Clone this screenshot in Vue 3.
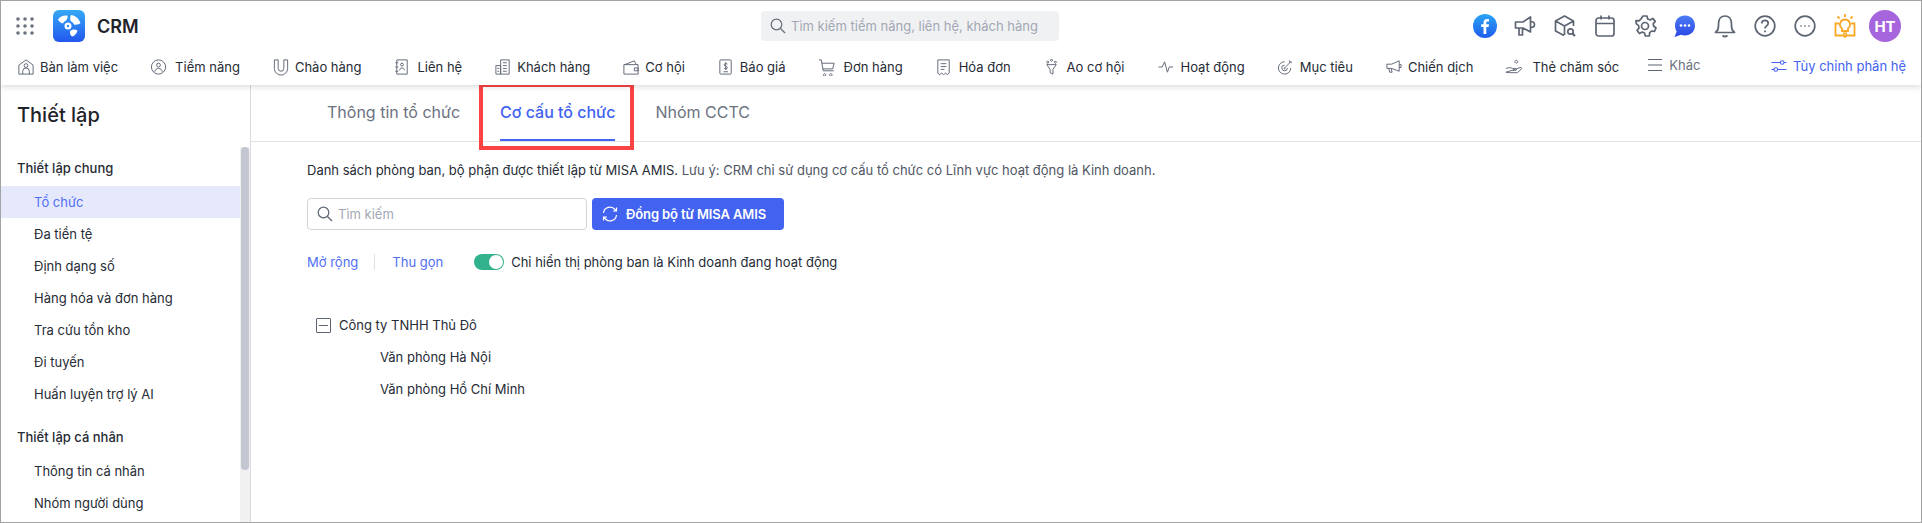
<script setup>
const navItems = [
  { label: 'Bàn làm việc', d: 'M2 17V7.500L9.500 2 17 7.500V17H2zM6 17v-3a3.500 3.500 0 0 1 7 0v3M9.500 6a2 2 0 1 1 0 4 2 2 0 0 1 0-4z' },
  { label: 'Tiềm năng', w: 20, d: 'M9 2a7.500 7.500 0 1 1 0 15 7.500 7.500 0 0 1 0-15zM9 5.500a2 2 0 1 1 0 4 2 2 0 0 1 0-4zM5 14.500c.6-2.500 2-3.500 4-3.500s3.400 1 4 3.500' },
  { label: 'Chào hàng', d: 'M2.500 2h4v9a3 3 0 0 0 6 0V2h4v9a7 7 0 0 1-14 0z' },
  { label: 'Liên hệ', w: 19, d: 'M4 2h11v15H4zM2.500 5h3M2.500 9.500h3M2.500 14h3M9.500 5.500a1.500 1.500 0 1 1 0 3 1.500 1.500 0 0 1 0-3zM7 13c.3-1.800 1.200-2.500 2.500-2.500s2.200.7 2.500 2.500' },
  { label: 'Khách hàng', d: 'M2 8h5v9H2zM7 17V2h9v15zM3.500 11h2M3.500 14h2M9.500 5h4M9.500 8h4M9.500 11h4M9.500 14h4' },
  { label: 'Cơ hội', d: 'M2 7h15v10H2zM3 7l10-4 2 4M13 10.500h4v3h-4z' },
  { label: 'Báo giá', d: 'M4 2h10a1 1 0 0 1 1 1v13a1 1 0 0 1-1 1H4a1 1 0 0 1-1-1V3a1 1 0 0 1 1-1zM11 6.500C10.500 5.500 7.500 5.500 7.500 7.200S11 8.500 11 10.200 8 12 7.500 10.800M9.200 4.500v8M7 14.500h4.500' },
  { label: 'Đơn hàng', w: 21, d: 'M1 2h2.500l2 11.500h11M4 5.500h13l-1.500 6H5M7 16.500a1.300 1.300 0 1 0 .01 0zM13.500 16.500a1.300 1.300 0 1 0 .01 0z' },
  { label: 'Hóa đơn', w: 19, d: 'M3 16V2h12v14l-2 1.500-2-1.500-2 1.500-2-1.500-2 1.500zM6 6h6M6 9h6M6 12h4' },
  { label: 'Ao cơ hội', w: 19, d: 'M4 7h10l-3.500 5v5l-3-1.500V12zM5 3.500a1 1 0 1 0 .01 0zM9 1.500a1 1 0 1 0 .01 0zM13 3.500a1 1 0 1 0 .01 0z' },
  { label: 'Hoạt động', w: 19, d: 'M1.500 9.500h4L8 4l3 11 2-5.500h4' },
  { label: 'Mục tiêu', d: 'M8 4a6.500 6.500 0 1 0 6.500 6.500M8 7.500a3 3 0 1 0 3 3M8 10.500a.5.5 0 1 0 .01 0M8 10.500l7-7M13 2.500l.5 2 2 .5' },
  { label: 'Chiến dịch', d: 'M2 6.500h5L15 3v11L7 11H2zM4 11l1 4h2.500l-1-4M15 7h2v3h-2' },
  { label: 'Thẻ chăm sóc', w: 22, d: 'M1 11c3-1 5-1 7 0h3c1.500 0 1.500 2 0 2H8M11 12l5-2c1.500-.5 2 1 1 2l-4 3.500H5L1 15zM12 2.500a1.500 1.500 0 1 0 .01 0zM13 7h.01' }
]
const settingsGeneral = ['Tổ chức', 'Đa tiền tệ', 'Định dạng số', 'Hàng hóa và đơn hàng', 'Tra cứu tồn kho', 'Đi tuyến', 'Huấn luyện trợ lý AI']
const settingsPersonal = ['Thông tin cá nhân', 'Nhóm người dùng']
</script>

<template>
  <div class="frame">
    <header class="header">
      <div class="top">
        <div class="brand">
          <svg class="grid" width="18" height="18" viewBox="0 0 18 18">
            <g fill="#6a7280">
              <circle cx="2" cy="2" r="1.800"/><circle cx="9" cy="2" r="1.800"/><circle cx="16" cy="2" r="1.800"/>
              <circle cx="2" cy="9" r="1.800"/><circle cx="9" cy="9" r="1.800"/><circle cx="16" cy="9" r="1.800"/>
              <circle cx="2" cy="16" r="1.800"/><circle cx="9" cy="16" r="1.800"/><circle cx="16" cy="16" r="1.800"/>
            </g>
          </svg>
          <svg class="logo" width="32" height="32" viewBox="0 0 32 32">
            <defs>
              <linearGradient id="lg" x1="0" y1="0" x2="0" y2="1">
                <stop offset="0" stop-color="#35a9f6"/><stop offset="1" stop-color="#2257ee"/>
              </linearGradient>
            </defs>
            <rect width="32" height="32" rx="6" fill="url(#lg)"/>
            <g fill="#fff">
              <path fill-rule="evenodd" d="M15 12.500a3.500 3.500 0 1 1 0 7 3.500 3.500 0 0 1 0-7zm0 2.300a1.200 1.200 0 1 0 0 2.400 1.200 1.200 0 0 0 0-2.400z"/>
              <path d="M5 9.500C7 6.500 10.500 5 14.500 5.500c.5 1.500-.3 3.800-1.500 5-1.300.8-2.300 1.500-3 3-1.800-.2-4-1.800-5-4z"/>
              <path d="M18 5c4 .3 8 3.500 9.500 8-1.500 1.500-4.500 2-6.500 1.500-.5-1.500-1.800-2.700-3.300-3.200C17 9.500 17 7 18 5z"/>
              <path d="M20 19.500c1.500 0 3.500.3 4.500 1-.3 2.500-2.500 5-5 6-1.500-.5-2.300-1.800-2.500-3.500-.1-1.200.2-2 .5-2.500 1-.2 1.700-.5 2.500-1z"/>
            </g>
          </svg>
          <span class="crm">CRM</span>
        </div>
        <div class="search-global">
          <svg width="16" height="16" viewBox="0 0 16 16" fill="none" stroke="#666d7a" stroke-width="1.200">
            <circle cx="6.500" cy="6.500" r="5.300"/><path d="M10.500 10.500l4.500 4.500"/>
          </svg>
          <span>Tìm kiếm tiềm năng, liên hệ, khách hàng</span>
        </div>
        <div class="tools">
          <svg class="tool" viewBox="0 0 24 24">
            <defs>
              <linearGradient id="fb" x1="0" y1="0" x2="0" y2="1">
                <stop offset="0" stop-color="#2aa4f4"/><stop offset="1" stop-color="#1f5cec"/>
              </linearGradient>
            </defs>
            <circle cx="12" cy="12" r="12" fill="url(#fb)"/>
            <path fill="#fff" d="M13.300 20v-7h2.300l.4-2.700h-2.700V8.700c0-.8.300-1.300 1.400-1.300H16V5.100c-.3 0-1.100-.1-2-.1-2.100 0-3.500 1.200-3.500 3.500v1.800H8.200V13h2.300v7z"/>
          </svg>
          <svg class="tool ln" viewBox="0 0 24 24">
            <path d="M2.500 8h7.500l7.500-5v15L10 14H2.500zM6 14l0 7h3.500v-7M17.500 7.500c2.500 0 4 1.300 4 3s-1.500 3-4 3"/>
          </svg>
          <svg class="tool ln" viewBox="0 0 24 24">
            <path d="M11 21.500L2.500 17V7L11.500 2l9 5v5M2.500 7l9 5v9M11.500 12l9-5"/>
            <circle cx="17.500" cy="17.500" r="2.700"/><path d="M19.500 19.500l2.500 2.500" stroke-width="2.200"/>
          </svg>
          <svg class="tool ln" viewBox="0 0 24 24">
            <rect x="3" y="4" width="18" height="18" rx="2.500"/><path d="M3 9.500h18M8 1.500v4M16 1.500v4"/>
          </svg>
          <svg class="tool ln" viewBox="0 0 24 24">
            <path d="M10 2h4l.7 3 2.400 1 2.700-1.600 2.400 3-2 2.400.4 2.200 2.400 2-1.500 3.400-3-.4-1.900 1.800-.2 3.200h-4l-.9-3-2.300-1-2.800 1.400-2.300-3 1.900-2.400-.4-2.400-2.400-2L3 6.600l3 .3 1.900-1.800z" stroke-linejoin="round"/>
            <circle cx="12" cy="12" r="3.500"/>
          </svg>
          <svg class="tool" viewBox="0 0 24 24">
            <defs>
              <linearGradient id="chat" x1="0" y1="0" x2="0" y2="1">
                <stop offset="0" stop-color="#4a7cf4"/><stop offset="1" stop-color="#2b46e4"/>
              </linearGradient>
            </defs>
            <path fill="url(#chat)" d="M12 1.500c5.800 0 10 4.300 10 10s-4.200 10-10 10c-1.400 0-2.800-.3-4-.8L1.500 23l2.200-5.500C2.600 16 2 13.800 2 11.500c0-5.700 4.200-10 10-10z"/>
            <g fill="#fff"><circle cx="8" cy="11.500" r="1.300"/><circle cx="12" cy="11.500" r="1.300"/><circle cx="16" cy="11.500" r="1.300"/></g>
          </svg>
          <svg class="tool ln" viewBox="0 0 24 24">
            <path d="M2.500 18.500c2-1.500 3-3 3-6.500V9.500C5.500 5 8 2 12 2s6.500 3 6.500 7.500V12c0 3.500 1 5 3 6.500zM9.500 21.500c1.500 1.200 3.500 1.200 5 0"/>
          </svg>
          <svg class="tool ln" viewBox="0 0 24 24">
            <circle cx="12" cy="12" r="9.800"/>
            <path d="M8.800 9.500c0-2 1.500-3.200 3.200-3.200s3.200 1.200 3.200 3c0 2.600-3.200 2.500-3.200 5.200M12 16.500v1.800"/>
          </svg>
          <svg class="tool ln" viewBox="0 0 24 24">
            <circle cx="12" cy="12" r="9.800"/>
            <path d="M7.500 12h1M11.500 12h1M15.500 12h1" stroke-width="1.800"/>
          </svg>
          <svg class="tool bulb" viewBox="0 0 24 24">
            <path d="M6 9.500H2.500v12h7.500c1 0 1.500.5 2 1.500.5-1 1-1.500 2-1.500h7.500v-12H18M12 5.500a5 5 0 0 1 3 9v2.500H9v-2.500a5 5 0 0 1 3-9zM10 19.500h4M12 0v3M4.500 2.500l2 2M19.500 2.500l-2 2"/>
          </svg>
          <div class="avatar">HT</div>
        </div>
      </div>
      <nav class="nav">
        <a v-for="item in navItems" :key="item.label" class="nav-item">
          <svg :width="item.w || 18" height="18" viewBox="0 0 19 19" preserveAspectRatio="xMinYMid meet" fill="none" stroke="#5d6573" stroke-width="1" stroke-linejoin="round">
            <path :d="item.d"/>
          </svg>
          <span>{{ item.label }}</span>
        </a>
        <a class="nav-item more">
          <svg width="18" height="18" viewBox="0 0 18 18" fill="none" stroke="#5d6573" stroke-width="1.100">
            <path d="M2 3.500h14M2 9h14M2 14.500h14"/>
          </svg>
          <span>Khác</span>
        </a>
        <a class="nav-item custom">
          <svg width="18" height="18" viewBox="0 0 18 18" fill="none" stroke="#4262f0" stroke-width="1.100">
            <path d="M1.500 5.500h9M14 5.500h2.500M1.500 12.500H4M7.500 12.500h9"/>
            <circle cx="12.200" cy="5.500" r="1.800"/><circle cx="5.800" cy="12.500" r="1.800"/>
          </svg>
          <span>Tùy chỉnh phân hệ</span>
        </a>
      </nav>
    </header>

    <div class="body">
      <aside class="sidebar">
        <h1 class="side-title">Thiết lập</h1>
        <div class="side-scroll">
          <div class="side-list">
            <div class="side-group">Thiết lập chung</div>
            <div
              v-for="(s, i) in settingsGeneral"
              :key="s"
              class="side-item"
              :class="{ active: i === 0 }"
            >{{ s }}</div>
            <div class="side-group second">Thiết lập cá nhân</div>
            <div v-for="s in settingsPersonal" :key="s" class="side-item">{{ s }}</div>
          </div>
          <div class="track"><div class="thumb"></div></div>
        </div>
      </aside>

      <main class="main">
        <div class="tabs">
          <div class="tab">Thông tin tổ chức</div>
          <div class="tab current">Cơ cấu tổ chức</div>
          <div class="tab">Nhóm CCTC</div>
          <div class="callout"></div>
        </div>
        <div class="content">
          <p class="note">Danh sách phòng ban, bộ phận được thiết lập từ MISA AMIS. <span>Lưu ý: CRM chỉ sử dụng cơ cấu tổ chức có Lĩnh vực hoạt động là Kinh doanh.</span></p>
          <div class="actions">
            <div class="search">
              <svg width="16" height="16" viewBox="0 0 16 16" fill="none" stroke="#5d6573" stroke-width="1.200">
                <circle cx="6.500" cy="6.500" r="5.300"/><path d="M10.500 10.500l4.500 4.500"/>
              </svg>
              <span>Tìm kiếm</span>
            </div>
            <button class="sync">
              <svg width="16" height="16" viewBox="0 0 16 16" fill="none" stroke="#fff" stroke-width="1.200">
                <path d="M1.500 7a6.500 6.500 0 0 1 11.500-3.500L14.500 5M14.500 1.500V5H11M14.500 9a6.500 6.500 0 0 1-11.500 3.500L1.500 11M1.500 14.500V11H5"/>
              </svg>
              <span>Đồng bộ từ MISA AMIS</span>
            </button>
          </div>
          <div class="filters">
            <a class="link">Mở rộng</a>
            <i class="sep"></i>
            <a class="link">Thu gọn</a>
            <span class="toggle"><span class="knob"></span></span>
            <span class="toggle-label">Chỉ hiển thị phòng ban là Kinh doanh đang hoạt động</span>
          </div>
          <div class="tree">
            <div class="tree-row">
              <span class="collapse"><i></i></span>
              <span>Công ty TNHH Thủ Đô</span>
            </div>
            <div class="tree-row child">Văn phòng Hà Nội</div>
            <div class="tree-row child">Văn phòng Hồ Chí Minh</div>
          </div>
        </div>
      </main>
    </div>
  </div>
</template>

<style>
html, body { margin: 0; background: #fff; overflow: hidden; }
</style>

<style scoped>
.frame {
  width: 1922px;
  height: 523px;
  box-sizing: border-box;
  border: 1px solid #a3a3a3;
  display: flex;
  flex-direction: column;
  overflow: hidden;
  font-family: Inter, "Noto Sans", sans-serif;
  font-size: 13px;
  color: #262b35;
  background: #fff;
}
.header {
  height: 84px;
  flex: none;
  box-shadow: 0 2px 6px rgba(0, 0, 0, .14);
  position: relative;
  z-index: 2;
  background: #fff;
}
.top {
  height: 50px;
  display: grid;
  grid-template-columns: 745px 298px 1fr;
  align-items: center;
  padding: 0 20px 0 15px;
  box-sizing: border-box;
}
.brand { display: flex; align-items: center; }
.grid { margin-right: 19px; }
.logo { margin-right: 12px; }
.crm { font-size: 18px; font-weight: 600; color: #1f2229; }
.search-global {
  height: 30px;
  background: #f0f1f3;
  border-radius: 4px;
  display: flex;
  align-items: center;
  gap: 5px;
  padding-left: 9px;
  color: #a2a7b3;
  font-size: 13px;
}
.tools {
  display: flex;
  justify-content: flex-end;
  align-items: center;
  gap: 16px;
}
.tool { width: 24px; height: 24px; flex: none; }
.ln { fill: none; stroke: #5d6573; stroke-width: 1.700; stroke-linejoin: round; }
.bulb { fill: none; stroke: #f9a825; stroke-width: 1.800; }
.avatar {
  width: 32px;
  height: 32px;
  margin-left: -4px;
  border-radius: 50%;
  background: #a765dd;
  color: #fff;
  font-weight: 700;
  font-size: 15px;
  display: flex;
  align-items: center;
  justify-content: center;
}
.nav {
  height: 32px;
  display: flex;
  align-items: center;
  gap: 32px;
  padding: 0 15px 0 16px;
}
.nav-item {
  display: flex;
  align-items: center;
  gap: 5px;
  white-space: nowrap;
  color: #262b35;
}
.more { color: #6b7280; margin-top: -4px; margin-left: -5px; }
.custom { color: #4262f0; margin-left: auto; margin-top: -2px; }
.body { flex: 1; display: flex; min-height: 0; }
.sidebar {
  width: 250px;
  flex: none;
  box-sizing: border-box;
  border-right: 1px solid #d9dbe1;
  display: flex;
  flex-direction: column;
}
.side-title {
  margin: 0;
  height: 62px;
  padding: 18px 0 0 16px;
  box-sizing: border-box;
  font-size: 20px;
  line-height: 24px;
  font-weight: 500;
  color: #1f2229;
  flex: none;
}
.side-scroll { flex: 1; display: flex; min-height: 0; }
.side-list { width: 239px; flex: none; overflow: hidden; padding-top: 3px; }
.side-group {
  height: 36px;
  line-height: 36px;
  padding-left: 16px;
  font-weight: 500;
}
.side-group.second { margin-top: 9px; }
.side-item {
  height: 32px;
  line-height: 32px;
  padding-left: 33px;
}
.side-item.active { background: #e6e9fc; color: #4f6ef5; }
.track { width: 10px; background: #f1f1f1; flex: none; }
.thumb {
  width: 8px;
  height: 323px;
  margin-left: 1px;
  border-radius: 4px;
  background: #c2c7d1;
}
.main { flex: 1; min-width: 0; }
.tabs {
  height: 57px;
  box-sizing: border-box;
  border-bottom: 1px solid #e0e2e7;
  padding-left: 76px;
  display: flex;
  gap: 40px;
  position: relative;
}
.tab {
  height: 56px;
  line-height: 54px;
  font-size: 16px;
  color: #6b7280;
  white-space: nowrap;
}
.tab.current {
  color: #4262f0;
  font-weight: 500;
  box-shadow: inset 0 -2px 0 #4262f0;
}
.callout {
  position: absolute;
  left: 228px;
  top: -2px;
  width: 155px;
  height: 67px;
  box-sizing: border-box;
  border: 4px solid #fb4343;
  pointer-events: none;
}
.content { padding: 0 0 0 56px; }
.note { margin: 0; padding-top: 19px; line-height: 18px; color: #262b35; }
.note span { color: #4f5663; }
.actions { margin-top: 19px; display: flex; gap: 5px; }
.search {
  width: 280px;
  height: 32px;
  box-sizing: border-box;
  border: 1px solid #d2d5dc;
  border-radius: 4px;
  display: flex;
  align-items: center;
  gap: 5px;
  padding-left: 9px;
  color: #a2a7b3;
}
.sync {
  width: 192px;
  height: 32px;
  border: 0;
  border-radius: 4px;
  background: #4262f0;
  color: #fff;
  font: 600 13px Inter, sans-serif;
  letter-spacing: -.12px;
  display: flex;
  align-items: center;
  gap: 8px;
  padding: 0 0 0 10px;
}
.filters {
  margin-top: 22px;
  height: 20px;
  display: flex;
  align-items: center;
}
.link { color: #4f6ef5; }
.sep { width: 1px; height: 16px; background: #dfe1e6; margin: 0 17px 0 16px; }
.toggle {
  width: 30px;
  height: 16px;
  margin-left: 31px;
  margin-right: 7px;
  border-radius: 8px;
  background: #31b18c;
  position: relative;
}
.knob {
  position: absolute;
  right: 1px;
  top: 1px;
  width: 14px;
  height: 14px;
  border-radius: 50%;
  background: #fff;
}
.tree { margin-top: 37px; padding-left: 9px; }
.tree-row {
  height: 32px;
  display: flex;
  align-items: center;
  gap: 8px;
}
.tree-row.child { padding-left: 64px; }
.collapse {
  width: 15px;
  height: 15px;
  box-sizing: border-box;
  border: 1px solid #5d6573;
  border-radius: 1px;
  display: flex;
  align-items: center;
  justify-content: center;
}
.collapse i { width: 9px; height: 1px; background: #5d6573; }
</style>
